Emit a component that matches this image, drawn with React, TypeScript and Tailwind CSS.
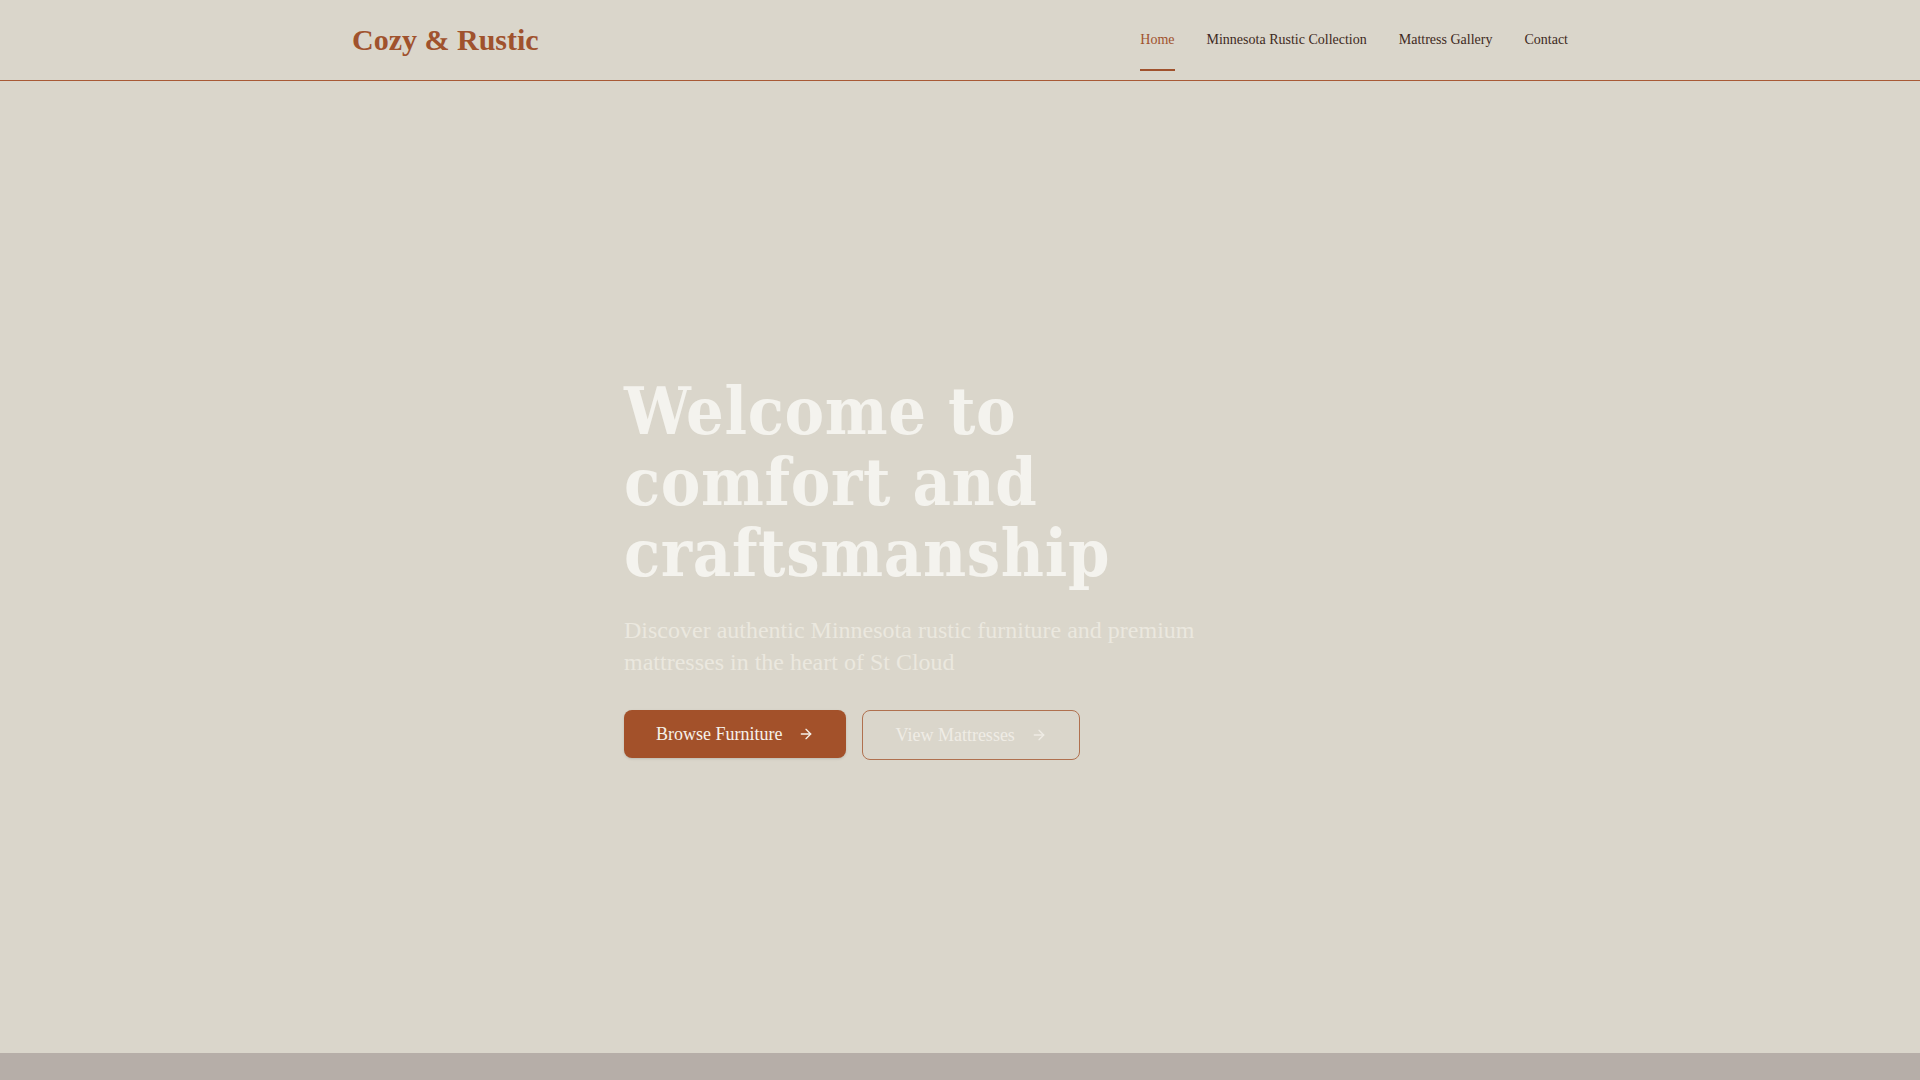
import React from "react";

function Arrow({ className }: { className?: string }) {
  return (
    <svg
      className={className}
      width="16"
      height="16"
      viewBox="0 0 24 24"
      fill="none"
      stroke="currentColor"
      strokeWidth="2"
      strokeLinecap="round"
      strokeLinejoin="round"
    >
      <path d="M5 12h14" />
      <path d="m12 5 7 7-7 7" />
    </svg>
  );
}

export default function App() {
  const serif = { fontFamily: '"Liberation Serif", "Times New Roman", serif' };
  return (
    <div className="min-h-screen w-full bg-[#dad6cb]" style={serif}>
      <header className="h-[81px] border-b border-[#a85a36] bg-[#dad6cb]">
        <div className="mx-auto flex h-20 max-w-[1280px] items-center justify-between px-8">
          <a className="text-[30px] font-bold leading-9 text-[#a0522d]">Cozy &amp; Rustic</a>
          <nav className="flex items-center gap-8 text-sm">
            <a className="relative leading-5 text-[#a0522d]">
              Home
              <span className="absolute -bottom-[21px] left-0 right-0 h-[2px] bg-[#a0522d]" />
            </a>
            <a className="leading-5 text-[#3e2a22]">Minnesota Rustic Collection</a>
            <a className="leading-5 text-[#3e2a22]">Mattress Gallery</a>
            <a className="leading-5 text-[#3e2a22]">Contact</a>
          </nav>
        </div>
      </header>

      <section className="flex h-[972px] items-center">
        <div className="mx-auto w-full max-w-2xl pt-[2px]">
          <h1
            className="max-w-[560px] text-[66px] font-bold leading-[71px] tracking-[0.01em] text-[#f4f3ee]"
            style={{ fontFamily: '"DejaVu Serif Condensed", "DejaVu Serif", serif', fontStretch: "condensed" }}
          >
            Welcome to comfort and craftsmanship
          </h1>
          <p className="mt-[25px] text-2xl text-[#ebe8df]">
            Discover authentic Minnesota rustic furniture and premium mattresses in the heart of St Cloud
          </p>
          <div className="mt-8 flex items-start gap-4">
            <a className="flex h-12 items-center gap-4 rounded-lg bg-[#a3512a] px-8 text-lg text-[#f6f1ea] shadow-sm">
              Browse Furniture
              <Arrow />
            </a>
            <a className="flex h-[50px] items-center gap-4 rounded-lg border border-[#b0714f] px-8 text-lg text-[#efece5]">
              View Mattresses
              <Arrow />
            </a>
          </div>
        </div>
      </section>

      <section className="h-[27px] bg-[#b6aea8]" />
    </div>
  );
}
